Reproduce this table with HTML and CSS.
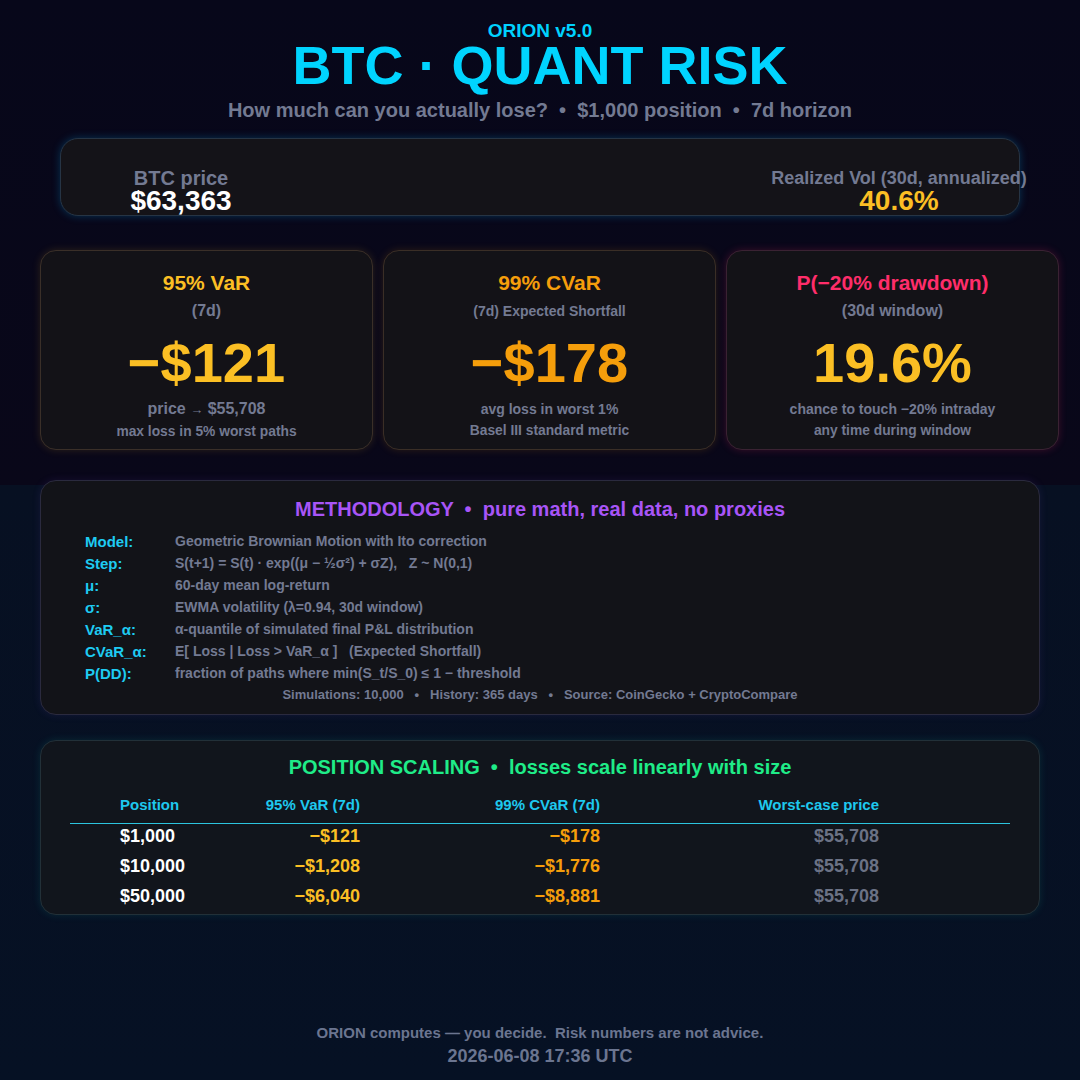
FILE: index.html
```html
<!DOCTYPE html>
<html lang="en">
<head>
<meta charset="utf-8">
<title>BTC · Quant Risk</title>
<link rel="stylesheet" href="styles.css">
</head>
<body>
<div class="page">
  <header class="header">
    <div class="tag">ORION v5.0</div>
    <h1 class="title">BTC · QUANT RISK</h1>
    <div class="subtitle">How much can you actually lose?&nbsp; •&nbsp; $1,000 position&nbsp; •&nbsp; 7d horizon</div>
  </header>

  <section class="price-card">
    <div class="stat">
      <div class="stat-label">BTC price</div>
      <div class="stat-value white">$63,363</div>
    </div>
    <div></div>
    <div class="stat">
      <div class="stat-label small">Realized Vol (30d, annualized)</div>
      <div class="stat-value yellow">40.6%</div>
    </div>
  </section>

  <section class="cards">
    <div class="card card-var">
      <div class="card-title yellow">95% VaR</div>
      <div class="card-sub big">(7d)</div>
      <div class="card-value yellow">−$121</div>
      <div class="card-note big">price <span class="arrow">→</span> $55,708</div>
      <div class="card-note2">max loss in 5% worst paths</div>
    </div>
    <div class="card card-cvar">
      <div class="card-title orange">99% CVaR</div>
      <div class="card-sub">(7d) Expected Shortfall</div>
      <div class="card-value orange">−$178</div>
      <div class="card-note">avg loss in worst 1%</div>
      <div class="card-note2">Basel III standard metric</div>
    </div>
    <div class="card card-dd">
      <div class="card-title pink">P(−20% drawdown)</div>
      <div class="card-sub big">(30d window)</div>
      <div class="card-value yellow">19.6%</div>
      <div class="card-note">chance to touch −20% intraday</div>
      <div class="card-note2">any time during window</div>
    </div>
  </section>

  <section class="panel method">
    <h2 class="panel-title purple">METHODOLOGY  •  pure math, real data, no proxies</h2>
    <div class="method-grid">
      <div class="m-key">Model:</div><div class="m-val">Geometric Brownian Motion with Ito correction</div>
      <div class="m-key">Step:</div><div class="m-val">S(t+1) = S(t) · exp((μ − ½σ²) + σZ),   Z ~ N(0,1)</div>
      <div class="m-key">μ:</div><div class="m-val">60-day mean log-return</div>
      <div class="m-key">σ:</div><div class="m-val">EWMA volatility (λ=0.94, 30d window)</div>
      <div class="m-key">VaR_α:</div><div class="m-val">α-quantile of simulated final P&amp;L distribution</div>
      <div class="m-key">CVaR_α:</div><div class="m-val">E[ Loss | Loss &gt; VaR_α ]   (Expected Shortfall)</div>
      <div class="m-key">P(DD):</div><div class="m-val">fraction of paths where min(S_t/S_0) ≤ 1 − threshold</div>
    </div>
    <div class="method-foot">Simulations: 10,000   •   History: 365 days   •   Source: CoinGecko + CryptoCompare</div>
  </section>

  <section class="panel scaling">
    <h2 class="panel-title green">POSITION SCALING  •  losses scale linearly with size</h2>
    <div class="table">
      <div class="row head">
        <div class="c1">Position</div><div class="c2">95% VaR (7d)</div><div class="c3">99% CVaR (7d)</div><div class="c4">Worst-case price</div><div></div>
      </div>
      <div class="row">
        <div class="c1 white">$1,000</div><div class="c2 yellow">−$121</div><div class="c3 orange">−$178</div><div class="c4 dim">$55,708</div><div></div>
      </div>
      <div class="row">
        <div class="c1 white">$10,000</div><div class="c2 yellow">−$1,208</div><div class="c3 orange">−$1,776</div><div class="c4 dim">$55,708</div><div></div>
      </div>
      <div class="row">
        <div class="c1 white">$50,000</div><div class="c2 yellow">−$6,040</div><div class="c3 orange">−$8,881</div><div class="c4 dim">$55,708</div><div></div>
      </div>
    </div>
  </section>

  <footer class="footer">
    <div class="foot1">ORION computes — you decide.&nbsp; Risk numbers are not advice.</div>
    <div class="foot2">2026-06-08 17:36 UTC</div>
  </footer>
</div>
</body>
</html>
```

FILE: styles.css
```css
* { box-sizing: border-box; }
html, body { margin: 0; padding: 0; }
body {
  width: 1080px;
  height: 1080px;
  overflow: hidden;
  font-family: "Liberation Sans", Arial, sans-serif;
  font-weight: bold;
  background: linear-gradient(180deg, #07071a 0px, #090719 485px, #071022 485px, #061124 1080px);
  color: #737a92;
}
.page { width: 1080px; height: 1080px; padding-top: 22px; }

.white { color: #ffffff; }
.yellow { color: #fbbf24; }
.orange { color: #f59e0b; }
.pink { color: #ff2d6a; }
.purple { color: #a855f7; }
.green { color: #1fec88; }
.dim { color: #6b7285; }

.header { text-align: center; }
.tag { font-size: 19px; line-height: 18px; color: #00d2ff; }
.title {
  margin: 0;
  font-size: 54px;
  line-height: 50px;
  color: #00d4ff;
  font-weight: bold;
}
.subtitle { margin-top: 8px; font-size: 20px; line-height: 24px; color: #737a92; }

.price-card {
  margin: 16px 60px 0;
  height: 78px;
  padding-top: 29px;
  display: grid;
  grid-template-columns: 240px 1fr 240px;
  background: #141318;
  border: 1px solid #263444;
  border-radius: 18px;
  box-shadow: 0 0 9px rgba(0, 180, 255, 0.25);
}
.stat { display: flex; flex-direction: column; align-items: center; white-space: nowrap; }
.stat-label { font-size: 20px; line-height: 20px; color: #737a92; }
.stat-label.small { font-size: 18px; }
.stat-value { font-size: 28px; line-height: 26px; }

.cards {
  margin: 34px 21px 0 40px;
  display: grid;
  grid-template-columns: repeat(3, 333px);
  gap: 10px;
}
.card {
  height: 200px;
  padding-top: 20px;
  text-align: center;
  background: #131217;
  border-radius: 16px;
  white-space: nowrap;
}
.card-var { border: 1px solid #3a2f28; box-shadow: 0 0 9px rgba(251, 191, 36, 0.15); }
.card-cvar { border: 1px solid #3a2e26; box-shadow: 0 0 9px rgba(245, 158, 11, 0.15); }
.card-dd { border: 1px solid #3a2233; box-shadow: 0 0 9px rgba(255, 45, 106, 0.2); }
.card-title { font-size: 21px; line-height: 24px; }
.card-sub { margin-top: 6px; font-size: 14px; line-height: 20px; }
.card-sub.big { font-size: 16px; }
.card-value { margin-top: 12px; font-size: 56px; line-height: 60px; }
.card-note { margin-top: 6px; font-size: 14px; line-height: 20px; }
.card-note.big { font-size: 16px; }
.arrow { font-size: 13px; }
.card-note2 { margin-top: 2px; font-size: 13.8px; line-height: 20px; }

.panel {
  margin: 30px 40px 0;
  border-radius: 16px;
}
.panel-title {
  margin: 0;
  text-align: center;
  font-size: 20px;
  line-height: 24px;
  font-weight: bold;
  white-space: pre;
}
.method {
  height: 235px;
  padding-top: 16px;
  background: #121318;
  border: 1px solid #2a2a3e;
  box-shadow: 0 0 8px rgba(120, 80, 220, 0.12);
}
.method-grid {
  margin-top: 9px;
  padding-left: 44px;
  display: grid;
  grid-template-columns: 90px 1fr;
  grid-auto-rows: 22px;
  align-items: center;
}
.m-key { font-size: 15px; color: #1ecbf2; }
.m-val { font-size: 14px; color: #737a92; white-space: pre; }
.method-foot { text-align: center; font-size: 13px; line-height: 22px; color: #737a92; white-space: pre; }

.scaling {
  margin-top: 25px;
  height: 175px;
  padding-top: 14px;
  background: #11151c;
  border: 1px solid #223038;
  box-shadow: 0 0 8px rgba(30, 220, 200, 0.12);
}
.table { margin: 15px 29px 0; }
.row {
  display: grid;
  grid-template-columns: 170px 120px 240px 279px 1fr;
  font-size: 18px;
  line-height: 24px;
  padding-top: 6px;
  white-space: nowrap;
}
.row.head {
  font-size: 15px;
  line-height: 22px;
  padding-top: 0;
  padding-bottom: 7px;
  color: #1ec8ee;
  border-bottom: 1px solid #2cc4de;
}
.row.head + .row { padding-top: 0; }
.c1 { padding-left: 50px; }
.c2, .c3, .c4 { text-align: right; }

.footer { margin-top: 107px; text-align: center; }
.foot1 { font-size: 15px; line-height: 22px; color: #6b7590; }
.foot2 { font-size: 18px; line-height: 24px; color: #6b7590; }
```
